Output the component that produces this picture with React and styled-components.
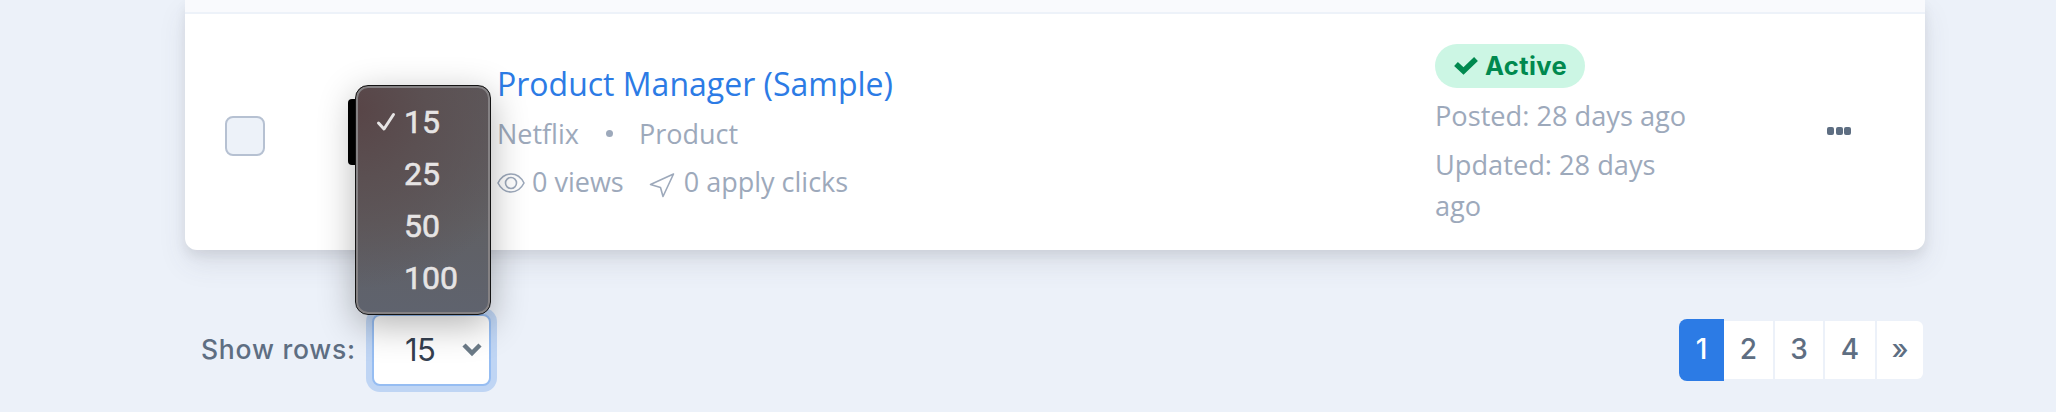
import React, { useState } from 'react'
import styled, { createGlobalStyle } from 'styled-components';

const GlobalStyle = createGlobalStyle`
    * {
        box-sizing: border-box;
    }
    body {
        margin: 0;
        background: #ecf1f9;
        font-family: "Open Sans", sans-serif;
        overflow: hidden;
    }
`;

const Page = styled.div`
    height: 412px;
    padding: 0 131px 0 185px;
    overflow: hidden;
`;

const Card = styled.div`
    height: 250px;
    background: #fff;
    border-radius: 0 0 12px 12px;
    box-shadow: 0 14px 28px rgba(65, 69, 88, 0.1), 0 6px 12px rgba(0, 0, 0, 0.07);
`;

const CardHead = styled.div`
    height: 14px;
    background: #f9fafd;
    border-bottom: 2px solid #edf2f9;
`;

const Row = styled.div`
    display: grid;
    grid-template-columns: 163px 149px 938px 357px 1fr;
    height: 236px;
`;

const CheckCell = styled.div`
    padding: 102px 0 0 40px;
`;

const CheckBox = styled.div`
    width: 40px;
    height: 40px;
    border: 2px solid #b6c1d2;
    border-radius: 8px;
    background: #edf2f9;
`;

const Logo = styled.div`
    width: 66px;
    height: 66px;
    margin-top: 85px;
    border-radius: 4px;
    background: #000;
`;

const JobCell = styled.div`
    padding-top: 46px;
`;

const Title = styled.a`
    display: block;
    margin-bottom: 1px;
    font-size: 32px;
    line-height: 48px;
    color: #2c7be5;
    white-space: nowrap;
`;

const Meta = styled.div`
    display: flex;
    align-items: center;
    height: 48px;
    font-size: 27px;
    color: #9da9bb;
    white-space: nowrap;

    svg {
        flex: none;
    }
`;

const Dot = styled.span`
    width: 7px;
    height: 7px;
    margin: 0 26px 0 27px;
    border-radius: 50%;
    background: #9da9bb;
`;

const StatusCell = styled.div`
    padding-top: 30px;
`;

const Badge = styled.div`
    display: flex;
    align-items: center;
    width: 150px;
    height: 44px;
    padding: 0 0 1px 19px;
    gap: 7px;
    border-radius: 22px;
    background: #ccf6e4;
    color: #00894f;
    font: 650 25.5px/43px Inter, sans-serif;
    letter-spacing: 0.4px;

    svg {
        margin-top: -1px;
    }
`;

const DateText = styled.div`
    width: 260px;
    margin-top: ${props => props.$top}px;
    font-size: 27.2px;
    line-height: 41px;
    color: #9da9bb;
`;

const MoreButton = styled.div`
    display: flex;
    gap: 1.5px;
    padding: 113px 0 0 35px;

    i {
        width: 7px;
        height: 7.5px;
        border-radius: 2px;
        background: #5e6e82;
    }
`;

const Footer = styled.div`
    display: flex;
    align-items: flex-start;
    padding-top: 64px;
    font-family: Inter, sans-serif;
    color: #5e6e82;
`;

const Label = styled.span`
    width: 187px;
    padding-left: 16px;
    margin-top: 15px;
    font-size: 26.5px;
    font-weight: 500;
    line-height: 40px;
    letter-spacing: 0.75px;
    white-space: nowrap;
`;

const SelectWrap = styled.div`
    position: relative;
`;

const Select = styled.div`
    display: flex;
    align-items: center;
    justify-content: space-between;
    width: 119px;
    height: 72px;
    padding: 0 7px 2px 31px;
    border: 2px solid #96bdf2;
    border-radius: 8px;
    background: #fff;
    box-shadow: 0 0 0 6px #bfd5f4;
    color: #344050;
    font-size: 31px;
    letter-spacing: -0.5px;
    cursor: pointer;
`;

const Menu = styled.div`
    position: absolute;
    left: -17px;
    bottom: 71px;
    width: 136px;
    height: 230px;
    padding-top: 10px;
    border: 1px solid #141414;
    border-radius: 13px;
    background: radial-gradient(circle at 0 10%, #584547 0, #5b5052 70px, rgba(96, 94, 98, 0) 180px), linear-gradient(#5e5a5d, #606064 60%, #5f636e);
    box-shadow: inset 0 0 0 2px #858284, 0 10px 36px rgba(0, 0, 0, 0.3);
`;

const Option = styled.div`
    display: flex;
    align-items: center;
    height: 52px;
    padding-left: 20px;
    color: #e6e4e4;
    font: 400 32px/52px Roboto, sans-serif;
    -webkit-text-stroke: 0.6px #e6e4e4;
    cursor: pointer;
`;

const Tick = styled.span`
    display: flex;
    width: 28px;
`;

const Pager = styled.div`
    display: flex;
    align-items: center;
    height: 62px;
    margin: 5px 2px 0 auto;
    gap: 2px;
`;

const PageLink = styled.div`
    width: ${props => props.$w}px;
    height: ${props => props.$active ? 62 : 58}px;
    margin-right: ${props => props.$active ? -2 : 0}px;
    border-radius: ${props => props.$active ? '8px 0 0 8px' : props.$last ? '0 6px 6px 0' : 0};
    background: ${props => props.$active ? '#2c7be5' : '#fff'};
    color: ${props => props.$active ? '#fff' : '#5e6e82'};
    font-size: 28px;
    font-weight: 500;
    line-height: ${props => props.$active ? 61 : 57}px;
    text-align: center;
`;

const sizes = [15, 25, 50, 100];
const pages = [
    { text: '1', w: 45 },
    { text: '2', w: 49 },
    { text: '3', w: 48 },
    { text: '4', w: 50 },
    { text: '»', w: 46 },
];

const Eye = styled.svg`
    margin: 4px 7px 0 0;
`;

const Send = styled.svg`
    margin: 7px 9px 0 25px;
`;

const EyeIcon = () => (
    <Eye width="28" height="22" viewBox="0 0 28 22" fill="none" stroke="#9da9bb" strokeWidth="1.6">
        <path d="M1 11C4 5 8.500 2 14 2S24 5 27 11C24 17 19.500 20 14 20S4 17 1 11Z" />
        <circle cx="14" cy="11" r="5.500" />
    </Eye>
);

const SendIcon = () => (
    <Send width="26" height="26" viewBox="0 0 26 26" fill="none" stroke="#9da9bb" strokeWidth="1.6" strokeLinejoin="round">
        <path d="M24.500 2L1.500 12.500L11.500 15.500L14 24.500Z" />
    </Send>
);

export default function App() {
    const [rows, setRows] = useState(15);
    const [page, setPage] = useState('1');

    return (
        <Page>
            <GlobalStyle />
            <Card>
                <CardHead />
                <Row>
                    <CheckCell><CheckBox /></CheckCell>
                    <Logo />
                    <JobCell>
                        <Title>Product Manager (Sample)</Title>
                        <Meta>Netflix<Dot />Product</Meta>
                        <Meta><EyeIcon />0 views<SendIcon />0 apply clicks</Meta>
                    </JobCell>
                    <StatusCell>
                        <Badge>
                            <svg width="24" height="20" viewBox="0 0 24 20" fill="none" stroke="#00894f" strokeWidth="5.5">
                                <path d="M2 9L9.500 16L22 4" />
                            </svg>
                            Active
                        </Badge>
                        <DateText $top={7}>Posted: 28 days ago</DateText>
                        <DateText $top={8}>Updated: 28 days ago</DateText>
                    </StatusCell>
                    <MoreButton><i /><i /><i /></MoreButton>
                </Row>
            </Card>
            <Footer>
                <Label>Show rows:</Label>
                <SelectWrap>
                    <Select>
                        {rows}
                        <svg width="20" height="16" viewBox="0 0 20 16" fill="none" stroke="#6c7b88" strokeWidth="4.500">
                            <path d="M2 4L10 12L18 4" />
                        </svg>
                    </Select>
                    <Menu>
                        {sizes.map(n => (
                            <Option key={n} onClick={() => setRows(n)}>
                                <Tick>
                                    {n === rows && (
                                        <svg width="20" height="20" viewBox="0 0 20 20" fill="none" stroke="#e6e4e4" strokeWidth="3" strokeLinecap="round" strokeLinejoin="round">
                                            <path d="M2.500 11L8 17L17.500 2.500" />
                                        </svg>
                                    )}
                                </Tick>
                                {n}
                            </Option>
                        ))}
                    </Menu>
                </SelectWrap>
                <Pager>
                    {pages.map(p => (
                        <PageLink key={p.text} $w={p.w} $active={p.text === page} $last={p.text === '»'} onClick={() => setPage(p.text)}>
                            {p.text}
                        </PageLink>
                    ))}
                </Pager>
            </Footer>
        </Page>
    )
}
